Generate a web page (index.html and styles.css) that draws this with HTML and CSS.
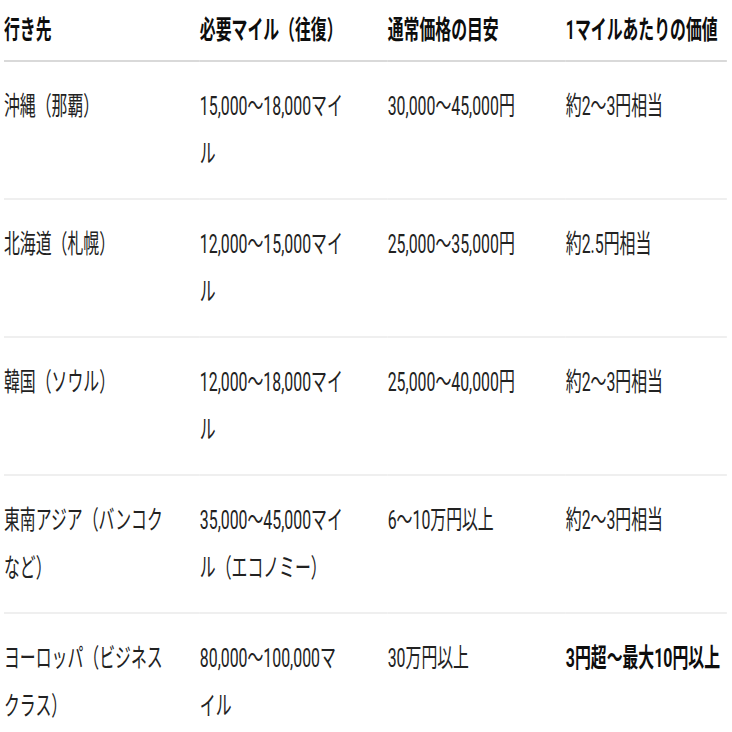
FILE: index.html
```html
<!DOCTYPE html>
<html lang="ja">
<head>
<meta charset="utf-8">
<title>マイルの価値</title>
<link rel="stylesheet" href="styles.css">
</head>
<body>
<div class="viewport">
  <div class="frame">
    <table class="miles">
      <colgroup>
        <col class="c1"><col class="c2"><col class="c3"><col class="c4">
      </colgroup>
      <thead>
        <tr>
          <th>行き先</th>
          <th>必要マイル（往復）</th>
          <th>通常価格の目安</th>
          <th>1マイルあたりの価値</th>
        </tr>
      </thead>
      <tbody>
        <tr>
          <td>沖縄（那覇）</td>
          <td>15,000〜18,000マイル</td>
          <td>30,000〜45,000円</td>
          <td>約2〜3円相当</td>
        </tr>
        <tr>
          <td>北海道（札幌）</td>
          <td>12,000〜15,000マイル</td>
          <td>25,000〜35,000円</td>
          <td>約2.5円相当</td>
        </tr>
        <tr>
          <td>韓国（ソウル）</td>
          <td>12,000〜18,000マイル</td>
          <td>25,000〜40,000円</td>
          <td>約2〜3円相当</td>
        </tr>
        <tr>
          <td>東南アジア（バンコクなど）</td>
          <td>35,000〜45,000マイル（エコノミー）</td>
          <td>6〜10万円以上</td>
          <td>約2〜3円相当</td>
        </tr>
        <tr>
          <td>ヨーロッパ（ビジネスクラス）</td>
          <td>80,000〜100,000マイル</td>
          <td>30万円以上</td>
          <td><strong>3円超〜最大10円以上</strong></td>
        </tr>
      </tbody>
    </table>
  </div>
</div>
</body>
</html>
```

FILE: styles.css
```css
html, body {
  margin: 0;
  padding: 0;
  background: #ffffff;
  overflow: hidden;
}

.viewport {
  width: 732px;
  overflow: hidden;
}

.frame {
  margin-left: 4px;
  width: 1185px;
  transform: scaleX(0.61);
  transform-origin: 0 0;
}

.miles {
  width: 1185px;
  table-layout: fixed;
  border-collapse: collapse;
  font-family: Roboto, "Noto Sans CJK JP", sans-serif;
  font-size: 26px;
  line-height: 48px;
  color: #222222;
}

.c1 { width: 321px; }
.c2 { width: 308px; }
.c3 { width: 292px; }
.c4 { width: 264px; }

.miles th {
  text-align: left;
  font-weight: 700;
  color: #0d0d0d;
  padding: 6px 40px 6px 0;
  border-bottom: 2px solid #d9d9d9;
  vertical-align: top;
}

.miles td {
  padding: 20px 40px 20px 0;
  border-bottom: 2px solid #efefef;
  vertical-align: top;
}

.miles td:nth-child(1) {
  padding-right: 45px;
}

.miles td:nth-child(2) {
  padding-right: 65px;
}

.miles th:last-child,
.miles td:last-child {
  padding-right: 0;
}

.miles strong {
  font-weight: 700;
  color: #0d0d0d;
}
```
